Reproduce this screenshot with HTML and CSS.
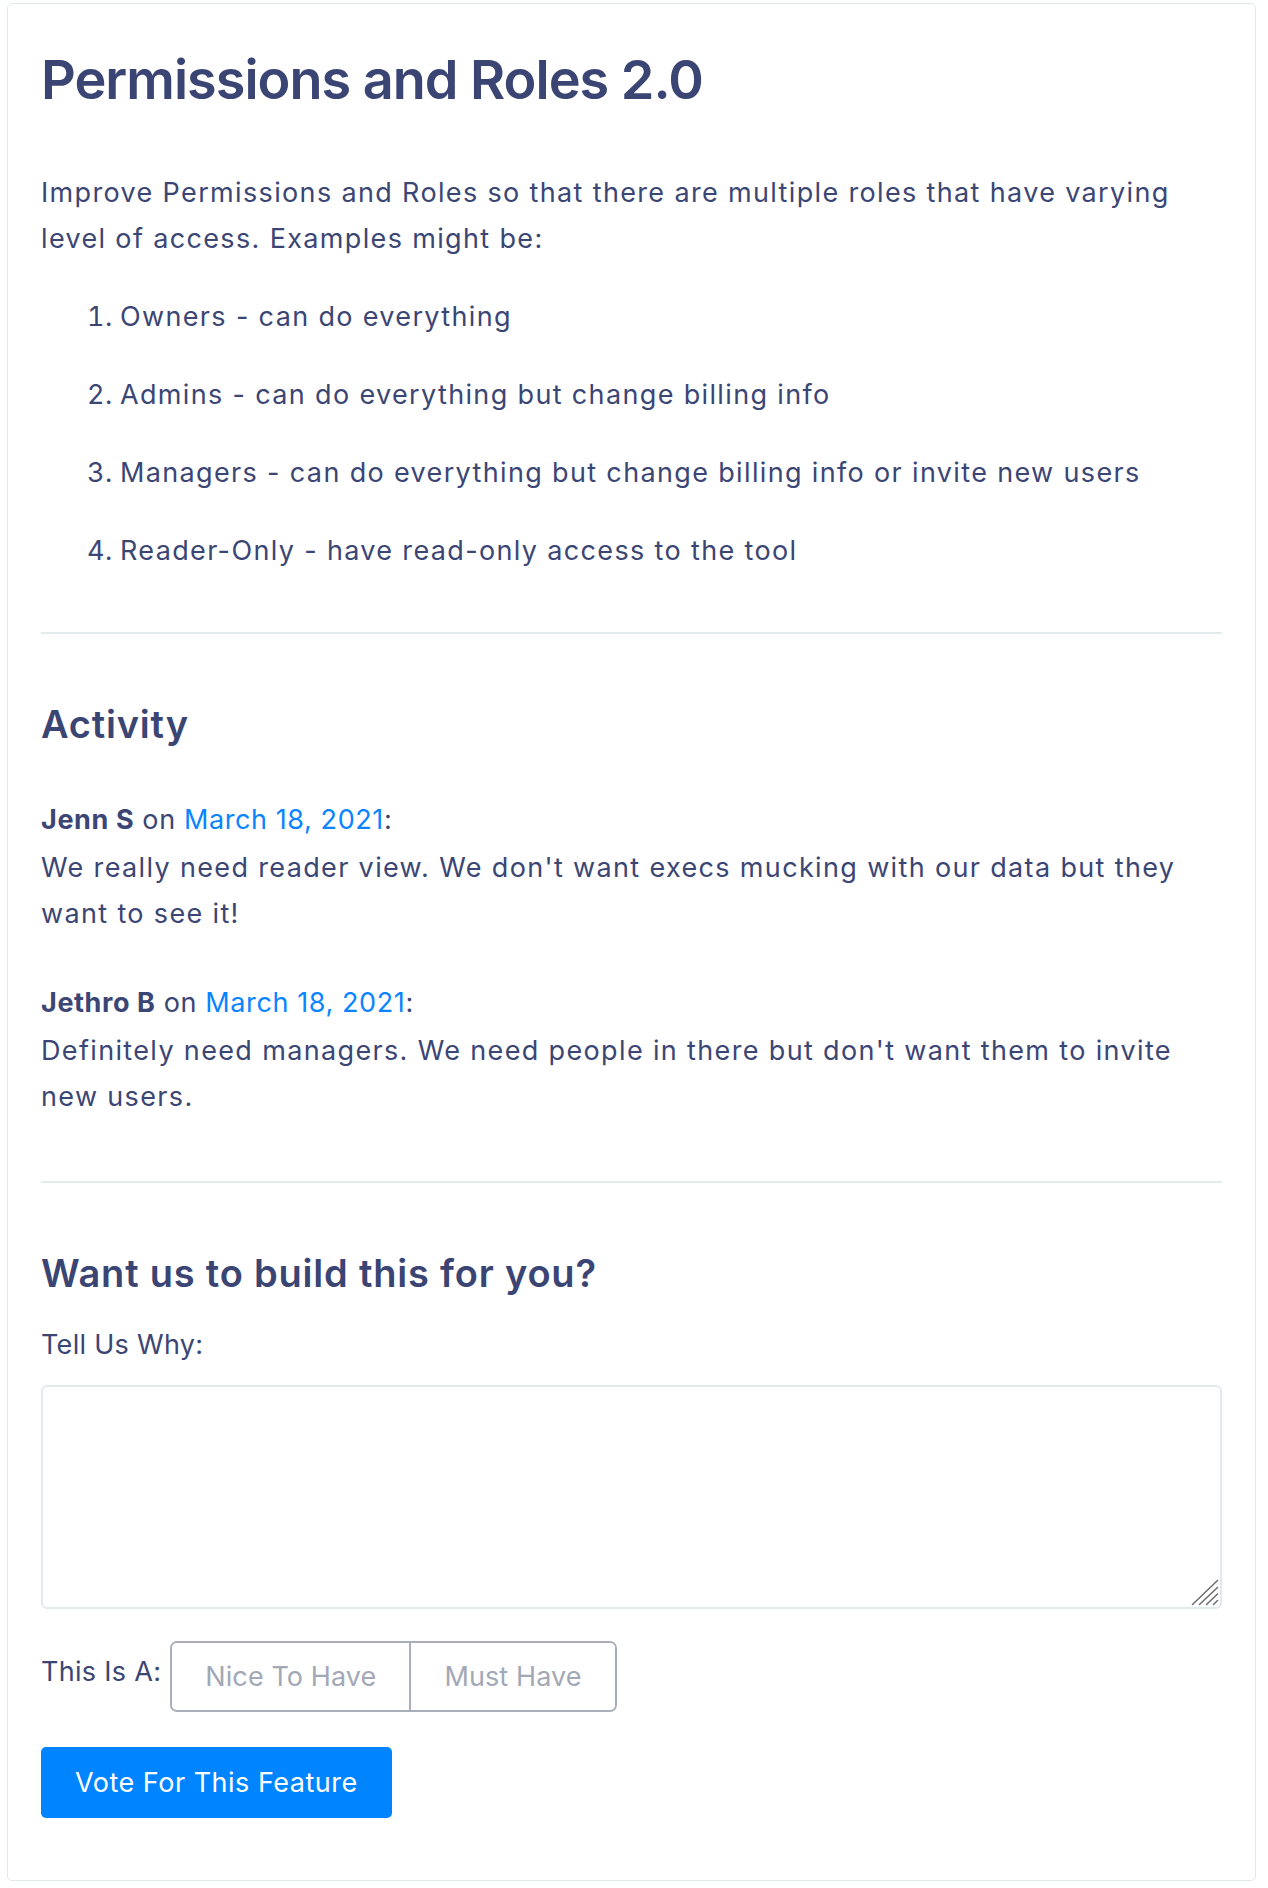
FILE: index.html
```html
<!DOCTYPE html>
<html lang="en">
<head>
<meta charset="utf-8">
<title>Permissions and Roles 2.0</title>
<link rel="stylesheet" href="styles.css">
</head>
<body>
<main class="card">
  <h1 class="title">Permissions and Roles 2.0</h1>
  <p class="intro">Improve Permissions and Roles so that there are multiple roles that have varying level of access. Examples might be:</p>
  <ol class="roles">
    <li>Owners - can do everything</li>
    <li>Admins - can do everything but change billing info</li>
    <li>Managers - can do everything but change billing info or invite new users</li>
    <li>Reader-Only - have read-only access to the tool</li>
  </ol>
  <hr class="divider">
  <h2 class="section-title">Activity</h2>
  <div class="comment">
    <div class="comment-meta"><strong class="author">Jenn S</strong> on <a class="date" href="#">March 18, 2021</a>:</div>
    <div class="comment-body">We really need reader view. We don't want execs mucking with our data but they want to see it!</div>
  </div>
  <div class="comment">
    <div class="comment-meta"><strong class="author">Jethro B</strong> on <a class="date" href="#">March 18, 2021</a>:</div>
    <div class="comment-body">Definitely need managers. We need people in there but don't want them to invite new users.</div>
  </div>
  <hr class="divider divider-second">
  <h2 class="section-title">Want us to build this for you?</h2>
  <form class="vote-form">
    <label class="field-label" for="why">Tell Us Why:</label>
    <div class="why-wrap">
      <textarea id="why" class="why"></textarea>
      <svg class="grip" width="28" height="27" viewBox="0 0 28 27" aria-hidden="true">
        <g stroke="#707070" stroke-width="1.6" stroke-linecap="round" fill="none">
          <line x1="1.5" y1="25.5" x2="26.5" y2="1.5"/>
          <line x1="8.5" y1="25.5" x2="26.5" y2="8.5"/>
          <line x1="15.5" y1="25.5" x2="26.5" y2="15"/>
          <line x1="22.5" y1="25.5" x2="26.5" y2="21.5"/>
        </g>
      </svg>
    </div>
    <div class="type-row">
      <span class="type-label">This Is A:</span>
      <div class="segmented">
        <button type="button" class="segment">Nice To Have</button>
        <button type="button" class="segment">Must Have</button>
      </div>
    </div>
    <button type="button" class="vote-btn">Vote For This Feature</button>
  </form>
</main>
</body>
</html>
```
FILE: styles.css
```css
* { box-sizing: border-box; }
html, body { background: #ffffff; }
body {
  margin: 3px 12px 7px 7px;
  font-family: Inter, "Noto Sans", sans-serif;
  font-size: 27px;
  line-height: 46px;
  letter-spacing: 0.3px;
  color: #3b4675;
}
.card {
  border: 1px solid #dfe8eb;
  border-radius: 5px;
  padding: 33px 33px 32px 33px;
  background: #fff;
}
.title {
  margin: 11px 0 0 0;
  font-size: 54px;
  line-height: 64px;
  font-weight: 600;
  letter-spacing: -1px;
  color: #3a4574;
}
.intro {
  margin: 58px 0 0 0;
  letter-spacing: 1.35px;
}
.roles {
  margin: 32px 0 0 0;
  padding-left: 79px;
  letter-spacing: 1.35px;
}
.roles li {
  margin-bottom: 32px;
}
.roles li::marker { letter-spacing: 0.3px; }
.roles li:last-child { margin-bottom: 0; }
.divider {
  margin: 58px 0 0 0;
  border: 0;
  height: 2px;
  background: #e2ebed;
}
.section-title {
  margin: 67px 0 0 0;
  font-size: 38px;
  line-height: 46px;
  font-weight: 600;
  letter-spacing: 0.8px;
  color: #3a4574;
}
.comment { margin-top: 50px; }
.comment + .comment { margin-top: 43px; }
.comment-meta { letter-spacing: 0.6px; }
.author { font-weight: 700; }
.date { color: #0a84ff; text-decoration: none; }
.comment-body { margin-top: 2px; letter-spacing: 1.35px; }
.divider-second { margin-top: 61px; }
.vote-form { display: flex; flex-direction: column; align-items: flex-start; }
.field-label { margin-top: 26px; }
.why-wrap {
  position: relative;
  margin-top: 17px;
  width: 100%;
}
.why {
  width: 100%;
  height: 224px;
  border: 2px solid #e1eaed;
  border-radius: 6px;
  font: inherit;
  resize: none;
  display: block;
}
.grip {
  position: absolute;
  right: 3px;
  bottom: 3px;
}
.type-row {
  margin-top: 32px;
  display: flex;
  align-items: flex-start;
  gap: 9px;
}
.type-label { margin-top: 8px; }
.segmented {
  display: flex;
  border: 2px solid #a9aeba;
  border-radius: 7px;
  overflow: hidden;
}
.segment {
  font: inherit;
  letter-spacing: 0.1px;
  color: #a3a8b6;
  background: #fff;
  border: 0;
  padding: 11px 33px 10px 33px;
  line-height: 46px;
}
.segment + .segment { border-left: 2px solid #a9aeba; }
.vote-btn {
  margin-top: 35px;
  margin-bottom: 30px;
  font: inherit;
  letter-spacing: 0.5px;
  line-height: 46px;
  color: #fff;
  background: #0084ff;
  border: 0;
  border-radius: 5px;
  padding: 13px 34px 12px 34px;
}
```
